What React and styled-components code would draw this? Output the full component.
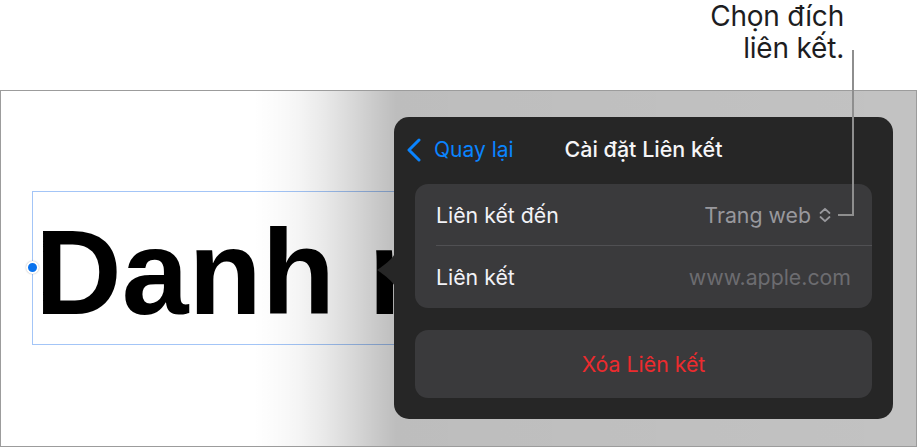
import React from "react";
import styled, { createGlobalStyle } from "styled-components";

const Global = createGlobalStyle`
  html, body { margin: 0; padding: 0; background: #ffffff; }
  body { font-family: Inter, "Noto Sans", "Liberation Sans", sans-serif; -webkit-font-smoothing: antialiased; }
  * { box-sizing: border-box; }
`;

const Page = styled.div`
  width: 918px;
  height: 447px;
  position: relative;
  display: flex;
  flex-direction: column;
  overflow: hidden;
  background: #fff;
`;

const AnnotationArea = styled.div`
  height: 90px;
  display: flex;
  justify-content: flex-end;
  padding: 0 74px 0 0;
`;

const Callout = styled.div`
  font-size: 28px;
  line-height: 32px;
  color: #1d1d1f;
  text-align: right;
  letter-spacing: -0.2px;
`;

const Frame = styled.div`
  width: 917px;
  height: 357px;
  border: 1px solid #9c9c9c;
  position: relative;
  overflow: hidden;
  background: #fff;
`;

const Canvas = styled.div`
  padding: 100px 0 0 31px;
`;

const TextBox = styled.div`
  position: relative;
  width: 640px;
  height: 154px;
  border: 1px solid #a3c5f7;
  padding: 9px 0 0 2px;
  font-family: "Liberation Sans", Arial, sans-serif;
  font-weight: 700;
  font-size: 120px;
  line-height: 143px;
  color: #000;
  white-space: nowrap;
`;

const Handle = styled.span`
  position: absolute;
  left: -7px;
  top: 69px;
  width: 13px;
  height: 13px;
  border-radius: 50%;
  background: #0a73ee;
  border: 2px solid #fff;
  box-shadow: 0 0 1.5px rgba(0, 0, 0, 0.35);
`;

const Shade = styled.div`
  position: absolute;
  inset: 0;
  background: linear-gradient(
    to right,
    rgba(0, 0, 0, 0) 252px,
    rgba(0, 0, 0, 0.015) 275px,
    rgba(0, 0, 0, 0.045) 300px,
    rgba(0, 0, 0, 0.09) 325px,
    rgba(0, 0, 0, 0.15) 350px,
    rgba(0, 0, 0, 0.21) 375px,
    rgba(0, 0, 0, 0.26) 395px,
    rgba(0, 0, 0, 0.24) 100%
  );
  pointer-events: none;
`;

const Popover = styled.div`
  position: absolute;
  left: 393px;
  top: 26px;
  width: 499px;
  height: 302px;
  border-radius: 15px;
  background: #262626;
  padding: 0 21px 21px 21px;
  display: flex;
  flex-direction: column;
`;

const Arrow = styled.svg`
  position: absolute;
  left: -18px;
  top: 131px;
`;

const Header = styled.div`
  position: relative;
  height: 67px;
  display: flex;
  align-items: center;
  justify-content: center;
`;

const Back = styled.div`
  position: absolute;
  left: -9px;
  top: 20px;
  display: flex;
  align-items: center;
  gap: 12px;
  color: #0a84ff;
  font-size: 21px;
`;

const Title = styled.div`
  color: #f5f5f7;
  font-size: 21.5px;
  font-weight: 500;
  margin-top: -3px;
`;

const Group = styled.div`
  background: #3a3a3c;
  border-radius: 13px;
  display: flex;
  flex-direction: column;
`;

const Row = styled.div`
  height: 62px;
  margin-left: 21px;
  padding-right: 21px;
  display: flex;
  align-items: center;
  justify-content: space-between;
  border-bottom: ${(p) => (p.$divider ? "1px solid #505053" : "none")};
  font-size: 21.3px;
  color: #f2f2f7;
`;

const Value = styled.span`
  color: ${(p) => p.$color};
  display: flex;
  align-items: center;
  gap: 7px;
  margin-right: ${(p) => p.$mr || 0}px;
`;

const DeleteButton = styled.div`
  margin-top: 22px;
  height: 68px;
  border-radius: 13px;
  background: #3a3a3c;
  display: flex;
  align-items: center;
  justify-content: center;
  color: #ec2b2e;
  font-size: 21.3px;
`;

const Leader = styled.svg`
  position: absolute;
  left: 0;
  top: 0;
  pointer-events: none;
`;

export default function App() {
  return (
    <>
      <Global />
      <Page>
        <AnnotationArea>
          <Callout>
            Chọn đích
            <br />
            liên kết.
          </Callout>
        </AnnotationArea>
        <Frame>
          <Canvas>
            <TextBox>
              <Handle />
              Danh mục
            </TextBox>
          </Canvas>
          <Shade />
          <Popover>
            <Arrow width="20" height="44" viewBox="0 0 20 44">
              <path d="M20 0 C20 8 14 12 8 17 C3 21 1 22 1 22 C1 22 3 23 8 27 C14 32 20 36 20 44 Z" fill="#262626" />
            </Arrow>
            <Header>
              <Back>
                <svg width="16" height="24" viewBox="0 0 16 24">
                  <path d="M13 2 L3 12 L13 22" fill="none" stroke="#0a84ff" strokeWidth="3" strokeLinecap="round" strokeLinejoin="round" />
                </svg>
                Quay lại
              </Back>
              <Title>Cài đặt Liên kết</Title>
            </Header>
            <Group>
              <Row $divider>
                <span>Liên kết đến</span>
                <Value $color="#98989d" $mr={19}>
                  Trang web
                  <svg width="14" height="16" viewBox="0 0 14 16">
                    <path d="M2.5 6 L7 1.8 L11.5 6 M2.5 10 L7 14.2 L11.5 10" fill="none" stroke="#98989d" strokeWidth="1.8" strokeLinecap="round" strokeLinejoin="round" />
                  </svg>
                </Value>
              </Row>
              <Row>
                <span>Liên kết</span>
                <Value $color="#6c6c70">www.apple.com</Value>
              </Row>
            </Group>
            <DeleteButton>Xóa Liên kết</DeleteButton>
          </Popover>
        </Frame>
        <Leader width="918" height="447" viewBox="0 0 918 447">
          <path d="M853 50 L853 215 L838 215" fill="none" stroke="#8e8e8e" strokeWidth="2" />
        </Leader>
      </Page>
    </>
  );
}
